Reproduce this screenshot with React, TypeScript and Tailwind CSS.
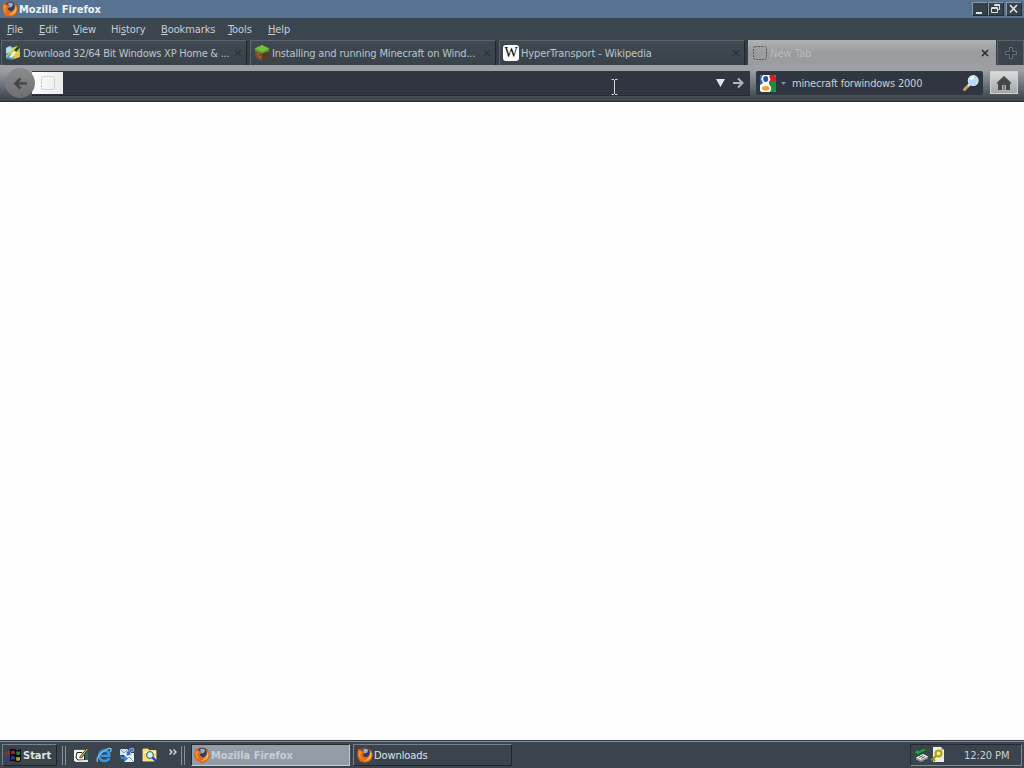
import { ReactNode } from 'react';

interface Tab {
  title: string;
  icon: ReactNode;
  textClass: string;
}

function FirefoxIcon() {
  return (
    <svg width="16" height="16" viewBox="0 0 16 16" className="shrink-0">
      <circle cx="8" cy="8" r="7.6" fill="#c9480c" />
      <circle cx="8.6" cy="6.8" r="5.9" fill="#27406f" />
      <path d="M6 2.4Q8.6 1 11 2.8L10.6 5L8.6 6.4L7 5.2Z" fill="#8fb4d6" />
      <path d="M1.6 1.2L3.4 3.4Q5 3 6 4.2L7.8 5.4Q7.4 6.8 5.8 7.2Q6 9.8 8.6 10.2Q11.6 9.8 12.4 7.4Q13.4 4.6 11.8 2.2Q15.4 4 15.4 8.4Q14.6 15 8 15.6Q1 15 .6 8.4Q.3 4.4 1.6 1.2Z" fill="#e56a17" />
      <path d="M13.6 4.2Q15.6 7.6 13.4 11.4Q10.4 14.6 6.6 13.4Q12.8 12.2 13.6 4.2Z" fill="#f7b73e" />
      <path d="M2 4.2Q3 3.8 4.4 4.8L3 8Q3.6 11.2 6 12Q1.6 11.6 1.6 7Z" fill="#f39a35" />
    </svg>
  );
}

function DownloadSiteIcon() {
  return (
    <svg width="16" height="16" viewBox="0 0 16 16" className="shrink-0">
      <path d="M1 3L6 1L9 3L8 14L1 12Z" fill="#4fa3bd" />
      <path d="M1 3L5 1L8 5L4 8L1 8Z" fill="#b5dce4" />
      <path d="M7 3L12 1L15 4L14 8L8 8Z" fill="#c9dc4e" />
      <path d="M1 11L8 5L15 7L15 12L9 14L2 14Z" fill="#e0cb4a" />
      <path d="M1 13L5 9L9 11L8 15L2 14Z" fill="#3d96c9" />
      <path d="M4 12L10 5L12 6L7 13Z" fill="#f4f4c4" />
      <path d="M9 5L13 1L14 4L11 7Z" fill="#2c3f33" />
    </svg>
  );
}

function GrassBlockIcon() {
  return (
    <svg width="16" height="16" viewBox="0 0 16 16" className="shrink-0">
      <path d="M1 4L8 7V16L1.5 12.5Z" fill="#7c4f2c" />
      <path d="M15 4L8 7V16L14.5 12.5Z" fill="#5b3a20" />
      <path d="M8 0L15 3.5V6L8 8.5L1 6V3.5Z" fill="#5d9a35" />
      <path d="M8 0L15 3.5L8 7L1 3.5Z" fill="#74bf40" />
      <path d="M3 8h2v2H3zM5 11h2v2H5z" fill="#93603a" />
    </svg>
  );
}

function WikipediaIcon() {
  return (
    <span className="flex h-4 w-4 shrink-0 items-center justify-center overflow-hidden rounded-[3px] bg-white font-['Liberation_Serif',serif] text-[14px] leading-none text-black">
      W
    </span>
  );
}

function BlankPageIcon({ color }: { color: string }) {
  return (
    <svg width="16" height="16" viewBox="0 0 16 16" className="shrink-0">
      <rect x="1.5" y="1.5" width="13" height="13" rx="2" fill="none" stroke={color} strokeDasharray="2 1" />
    </svg>
  );
}

function CloseIcon({ color }: { color: string }) {
  return (
    <svg width="8" height="8" viewBox="0 0 8 8" className="shrink-0">
      <path d="M1 1L7 7M7 1L1 7" stroke={color} strokeWidth="1.6" />
    </svg>
  );
}

function GoogleIcon() {
  return (
    <svg width="16" height="17" viewBox="0 0 16 17" className="shrink-0">
      <rect width="16" height="17" rx="2" fill="#fff" />
      <path d="M0 2Q0 0 2 0H3L1 4L3 8L0 10Z" fill="#2c62b0" />
      <path d="M10 0H14Q16 0 16 2V6H10Q11 3 9 2Z" fill="#d61f22" />
      <path d="M9 6H16V15Q16 17 14 17H10Q12 14 11 12L9 9Z" fill="#16913c" />
      <ellipse cx="5.7" cy="4" rx="2.5" ry="3" fill="#24559f" />
      <ellipse cx="5.7" cy="13.3" rx="3.7" ry="2.4" fill="#eba324" />
    </svg>
  );
}

function SearchIcon() {
  return (
    <svg width="18" height="18" viewBox="0 0 18 18" className="shrink-0">
      <path d="M2.5 15.5L6.5 11.5" stroke="#c9a05a" strokeWidth="3" strokeLinecap="round" />
      <path d="M6 12L8 10" stroke="#e8edf2" strokeWidth="2" />
      <circle cx="11.2" cy="6.6" r="4.9" fill="#b7dcf7" stroke="#dbe6f0" strokeWidth="1.2" />
      <path d="M8.6 6Q9.4 3.6 12 3.6" stroke="#fff" strokeWidth="1.8" fill="none" />
    </svg>
  );
}

function WindowsFlag() {
  return (
    <svg width="17" height="15" viewBox="0 0 17 15" className="shrink-0">
      <path d="M5 1.5Q8 0 10.5 1.5Q13 3 16 1V13Q13 15 10.5 13.5Q8 12 5 13.5Z" fill="#080a0c" />
      <path d="M6 3Q8 1.8 9.8 3V6.2Q8 5.2 6 6.2Z" fill="#a5262c" />
      <path d="M11.2 3.3Q13.2 4 15 3V6.4Q13.2 7.4 11.2 6.6Z" fill="#2f7c35" />
      <path d="M6 8.6Q8 7.6 9.8 8.6V11.8Q8 10.8 6 11.8Z" fill="#3238a0" />
      <path d="M11.2 9Q13.2 9.7 15 8.8V12.2Q13.2 13.2 11.2 12.4Z" fill="#b5a62c" />
      <path d="M0 4h2v1H0zM3 3h1v3H3zM1 6h2v1H1z" fill="#a8332f" />
      <path d="M0 10h2v1H0zM3 9h1v3H3zM1 12h2v1H1z" fill="#3238a0" />
    </svg>
  );
}

function ShowDesktopIcon() {
  return (
    <svg width="16" height="16" viewBox="0 0 16 16">
      <path d="M2 2H15V15H2Z" fill="#1c6f78" />
      <path d="M1 3H12V14H1Z" fill="#f2f3e7" />
      <path d="M4 5.5H9L11.5 8V13H5L3 11Z" fill="#fff" stroke="#1a2428" />
      <path d="M6.5 10.5L14 1L15.5 2L8.5 11Z" fill="#e0b04d" stroke="#2a1c10" strokeWidth=".8" />
      <path d="M11 13H15V15H2V14Z" fill="#e2e6cf" />
    </svg>
  );
}

function InternetExplorerIcon() {
  return (
    <svg width="16" height="16" viewBox="0 0 16 16">
      <path d="M13.4 11Q12 14 8.2 14Q3.2 13.6 3.2 8.8Q3.6 3.8 8.4 3.6Q13.4 4 13.2 8.8H5" fill="none" stroke="#3399e4" strokeWidth="2.6" />
      <path d="M1.6 14.8Q-.4 11.4 5.4 6Q12 .2 14.8 1.6Q15.8 2.6 14.2 5.2" fill="none" stroke="#7cc2f2" strokeWidth="1.3" />
    </svg>
  );
}

function OutlookIcon() {
  return (
    <svg width="16" height="16" viewBox="0 0 16 16">
      <path d="M1 2H9V8H1Z" fill="#cfe2f6" />
      <path d="M5 6H15V15H5Z" fill="#eaf2fb" />
      <path d="M1 2L5 6L9 2M5 15L10 10L15 15" fill="none" stroke="#6e9fd2" />
      <path d="M14 1Q10 1 9.4 4.4L7.4 3.6V9L12.6 7.6L11 6Q11.4 4 15 4Z" fill="#2e6fc0" stroke="#d6e6f7" strokeWidth=".6" />
      <path d="M1 8Q1 12.6 5 12.6V15L9 11.6L5 8V10Q3 10.4 1 8Z" fill="#3d85d0" />
    </svg>
  );
}

function FindFilesIcon() {
  return (
    <svg width="16" height="16" viewBox="0 0 16 16">
      <path d="M1 2H6L7 3.5H14V14H1Z" fill="#f2dc6b" stroke="#fff3a4" strokeWidth=".8" />
      <path d="M2 4.5H13V6H2Z" fill="#fff6b4" />
      <path d="M10 10L15 15" stroke="#2442b8" strokeWidth="2.4" />
      <circle cx="8" cy="8" r="3.4" fill="#d7f6fb" stroke="#30505f" />
    </svg>
  );
}

function SafelyRemoveIcon() {
  return (
    <svg width="17" height="16" viewBox="0 0 17 16">
      <path d="M3 10.5L10 7L15 9.5V11.5L8 15L3 12.5Z" fill="#8d9390" />
      <path d="M3 10.5L10 7L15 9.5L8 13Z" fill="#e9ece9" />
      <path d="M6 10.5L10 8.5M8 11.5L12 9.5" stroke="#59605f" />
      <path d="M1 5.5L5.5 2V4L12 1L13 3.5L6.5 6.5V8.5Z" fill="#23a046" stroke="#0b4c21" strokeWidth=".6" />
    </svg>
  );
}

function TrayDocIcon() {
  return (
    <svg width="16" height="16" viewBox="0 0 16 16">
      <path d="M3 0H11L14 3V15H3Z" fill="#edeedd" />
      <path d="M11 0L14 3H11Z" fill="#a7aa9b" />
      <circle cx="8.5" cy="6.5" r="3" fill="#f3ec96" stroke="#aea31c" strokeWidth="2.2" />
      <path d="M6.2 9L1 13.2M3 12L5 14" stroke="#958c17" strokeWidth="1.8" />
    </svg>
  );
}

const menuItems = [
  { key: 'F', before: '', after: 'ile', width: 'w-[32px]' },
  { key: 'E', before: '', after: 'dit', width: 'w-[34px]' },
  { key: 'V', before: '', after: 'iew', width: 'w-[38px]' },
  { key: 's', before: 'Hi', after: 'tory', width: 'w-[50px]' },
  { key: 'B', before: '', after: 'ookmarks', width: 'w-[67px]' },
  { key: 'T', before: '', after: 'ools', width: 'w-[40px]' },
  { key: 'H', before: '', after: 'elp', width: 'w-[38px]' },
];

const tabs: Tab[] = [
  {
    title: 'Download 32/64 Bit Windows XP Home & ...',
    icon: <DownloadSiteIcon />,
    textClass: 'tracking-[-0.25px]',
  },
  {
    title: 'Installing and running Minecraft on Wind...',
    icon: <GrassBlockIcon />,
    textClass: 'tracking-[-0.17px]',
  },
  {
    title: 'HyperTransport - Wikipedia',
    icon: <WikipediaIcon />,
    textClass: 'tracking-[-0.13px]',
  },
];

function WindowButton({ children }: { children: ReactNode }) {
  return (
    <div className="h-[14px] w-4 border border-[#242c33] border-t-[#8899a5] border-l-[#8899a5] bg-[#36414a]">
      <svg width="14" height="12" viewBox="0 0 14 12">
        {children}
      </svg>
    </div>
  );
}

function TitleBar() {
  return (
    <div className="flex h-[18px] items-center bg-[#587391] pr-[2px] pl-[2px]">
      <FirefoxIcon />
      <span className="mt-px ml-px grow font-bold text-[#f0f4f7]">Mozilla Firefox</span>
      <div className="flex text-[#dce2e5]">
        <WindowButton>
          <path d="M3 9H9V11H3Z" fill="currentColor" />
        </WindowButton>
        <WindowButton>
          <path d="M5.5 3V1.5H10.5V6.5H8.5M2.5 4.5H8.5V9.5H2.5ZM2 5.5H9M5 2.5H11" fill="none" stroke="currentColor" />
        </WindowButton>
        <div className="ml-[2px]">
          <WindowButton>
            <path d="M3 2L10 9.5M10 2L3 9.5" stroke="currentColor" strokeWidth="1.7" />
          </WindowButton>
        </div>
      </div>
    </div>
  );
}

function MenuBar() {
  return (
    <div className="flex h-[22px] items-center bg-gradient-to-b from-[#3b4851] to-[#3d444e] pt-px pl-[7px] tracking-[-0.1px] text-[#c8cdd3]">
      {menuItems.map((item) => (
        <span key={item.after} className={`${item.width} shrink-0 whitespace-nowrap`}>
          {item.before}
          <span className="underline underline-offset-1">{item.key}</span>
          {item.after}
        </span>
      ))}
    </div>
  );
}

function TabStrip() {
  return (
    <div className="flex h-[25px] bg-[#353d46]">
      {tabs.map((tab) => (
        <div
          key={tab.title}
          className="mr-[2px] ml-px flex w-[246px] shrink-0 items-center border border-b-0 border-[#5b646b] border-r-[#1e252b] bg-gradient-to-b from-[#414a52] to-[#394149] pr-1 pl-[3px] text-[#bdc4ca]"
        >
          {tab.icon}
          <span className={`mt-[2px] ml-[2px] grow whitespace-nowrap ${tab.textClass}`}>{tab.title}</span>
          <CloseIcon color="#2f373e" />
        </div>
      ))}
      <div className="ml-px flex w-[248px] shrink-0 items-center bg-gradient-to-b from-[#b0b2b4] via-[#999b9f] to-[#9c9da2] pr-[7px] pl-1">
        <BlankPageIcon color="#55595c" />
        <span className="mt-[2px] ml-[2px] grow text-[#b9bbbe]">New Tab</span>
        <CloseIcon color="#292d30" />
      </div>
      <div className="ml-px flex grow items-center justify-center border border-b-0 border-[#59626a] bg-[#3b434b]">
        <svg width="14" height="14" viewBox="0 0 14 14">
          <path d="M5.5 1.5H8.5V5.5H12.5V8.5H8.5V12.5H5.5V8.5H1.5V5.5H5.5Z" fill="#30383f" stroke="#66707a" />
        </svg>
      </div>
    </div>
  );
}

function NavBar() {
  return (
    <div className="relative flex h-[37px] border-b border-[#242b31] bg-gradient-to-b from-[#9e9fa5] from-15% via-[#747980] via-50% to-[#414a50] to-90% pt-[6px] pl-[5px]">
      <div className="z-10 -mt-[3px] flex h-[30px] w-[30px] shrink-0 items-center justify-center rounded-full bg-gradient-to-b from-[#8b8b8c] to-[#6d6f72]">
        <svg width="15" height="13" viewBox="0 0 15 13">
          <path d="M7.5 1.5L2.5 6.5L7.5 11.5M2.5 6.5H14" fill="none" stroke="#43484d" strokeWidth="2.6" />
        </svg>
      </div>
      <div className="-ml-[3px] flex h-[24px] w-[718px] shrink-0 items-center bg-[#30363f] shadow-[0_1px_0_#232a30]">
        <div className="flex h-[22px] w-[31px] shrink-0 items-center justify-center bg-gradient-to-r from-white to-[#e9eaec]">
          <BlankPageIcon color="#bfc2c4" />
        </div>
        <div className="grow" />
        <svg width="9" height="8" viewBox="0 0 9 8">
          <path d="M0 0H9L4.5 8Z" fill="#e1e5e8" />
        </svg>
        <svg width="12" height="12" viewBox="0 0 12 12" className="mr-[6px] ml-[7px]">
          <path d="M1 6H10M6 1.5L10.5 6L6 10.5" fill="none" stroke="#aeb3b7" strokeWidth="2" />
        </svg>
      </div>
      <div className="ml-[6px] flex h-[24px] w-[227px] shrink-0 items-center rounded-[2px] bg-[#30363f] pl-[4px]">
        <GoogleIcon />
        <svg width="5" height="3" viewBox="0 0 5 3" className="mt-px mr-[6px] ml-[5px]">
          <path d="M0 0H5L2.5 3Z" fill="#8d9499" />
        </svg>
        <span className="mt-[2px] grow tracking-[-0.2px] text-[#c9cfd5]">minecraft forwindows 2000</span>
        <div className="mr-[3px]">
          <SearchIcon />
        </div>
      </div>
      <div className="ml-[7px] flex h-[23px] w-[28px] shrink-0 items-center justify-center border border-[#d0d2d3] bg-gradient-to-b from-[#dadbdc] to-[#a3a5a7]">
        <svg width="16" height="14" viewBox="0 0 16 14">
          <path d="M8 0L16 7.5H14V14H10V9H6V14H2V7.5H0Z" fill="#42484c" />
          <path d="M7 9H9V14H7Z" fill="#777b7d" />
        </svg>
      </div>
      {/* text cursor */}
      <svg width="8" height="16" viewBox="0 0 8 16" className="absolute top-[14px] left-[611px]">
        <path d="M.5 .5H3M4 .5H6.5M3.5 1V15M.5 15.5H3M4 15.5H6.5" fill="none" stroke="#d3d7da" />
      </svg>
    </div>
  );
}

function Taskbar() {
  return (
    <div className="flex h-[28px] items-center border-t border-[#343c44] bg-[#3b434d] pt-px text-[#dfe4e8] shadow-[inset_0_1px_0_#858e96]">
      <div className="ml-[2px] flex h-[22px] w-[55px] shrink-0 items-center border border-[#1e242a] border-t-[#77828c] border-l-[#77828c] pl-[2px]">
        <WindowsFlag />
        <span className="mt-px ml-px font-bold">Start</span>
      </div>
      <div className="ml-[5px] h-[19px] w-px bg-[#87919b]" />
      <div className="ml-[2px] h-[19px] w-px bg-[#87919b]" />
      <div className="ml-[7px] flex w-[108px] shrink-0 items-center gap-[7px]">
        <ShowDesktopIcon />
        <InternetExplorerIcon />
        <OutlookIcon />
        <FindFilesIcon />
        <svg width="8" height="6" viewBox="0 0 8 6" className="mb-[7px] ml-[4px] shrink-0">
          <path d="M.5 .5L3 3L.5 5.5M4.5 .5L7 3L4.5 5.5" fill="none" stroke="#e0e5e9" strokeWidth="1.3" />
        </svg>
      </div>
      <div className="h-[19px] w-px bg-[#87919b]" />
      <div className="ml-[2px] h-[19px] w-px bg-[#87919b]" />
      <div className="ml-[6px] flex h-[22px] w-[159px] shrink-0 items-center border border-[#c3ccd3] border-t-[#242b31] border-l-[#242b31] bg-[#929da8] pl-[2px]">
        <FirefoxIcon />
        <span className="mt-[2px] ml-px font-bold text-[#c6ced5]">Mozilla Firefox</span>
      </div>
      <div className="ml-[3px] flex h-[22px] w-[159px] shrink-0 items-center border border-[#20272d] border-t-[#77828c] border-l-[#77828c] pl-[3px]">
        <FirefoxIcon />
        <span className="mt-px ml-px tracking-[-0.1px]">Downloads</span>
      </div>
      <div className="grow" />
      <div className="mr-[2px] flex h-[22px] w-[112px] shrink-0 items-center border border-[#7f8992] border-t-[#222930] border-l-[#222930] pl-[2px]">
        <SafelyRemoveIcon />
        <TrayDocIcon />
        <span className="mt-[2px] ml-[18px] whitespace-nowrap tracking-[-0.1px] text-[#cbd1d6]">12:20 PM</span>
      </div>
    </div>
  );
}

export default function App() {
  return (
    <div className="flex h-[768px] w-[1024px] flex-col overflow-hidden bg-white font-['DejaVu_Sans_Condensed','DejaVu_Sans',sans-serif] text-[11px] leading-[14px]">
      <TitleBar />
      <MenuBar />
      <TabStrip />
      <NavBar />
      <div className="grow bg-[#fefefe]" />
      <Taskbar />
    </div>
  );
}
